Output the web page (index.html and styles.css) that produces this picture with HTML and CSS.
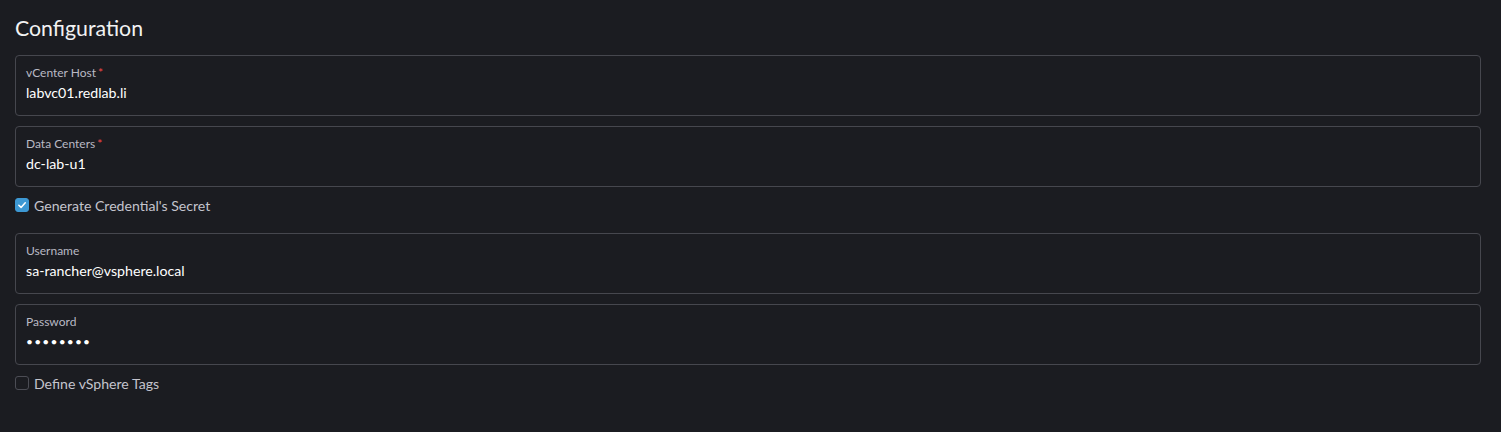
FILE: index.html
```html
<!DOCTYPE html>
<html>
<head>
<meta charset="utf-8">
<link rel="stylesheet" href="styles.css">
</head>
<body>
<div class="page">
  <h3 class="title">Configuration</h3>
  <div class="field">
    <label class="label">vCenter Host<span class="req">*</span></label>
    <div class="value">labvc01.redlab.li</div>
  </div>
  <div class="field">
    <label class="label">Data Centers<span class="req">*</span></label>
    <div class="value">dc-lab-u1</div>
  </div>
  <div class="check-row check-row-first">
    <span class="checkbox checked">
      <svg viewBox="0 0 14 14" width="14" height="14"><path d="M3.3 7.3 L5.9 9.8 L10.8 4.4" fill="none" stroke="#fff" stroke-width="1.8" stroke-linecap="round" stroke-linejoin="round"/></svg>
    </span>
    <span class="check-label">Generate Credential's Secret</span>
  </div>
  <div class="field">
    <label class="label">Username</label>
    <div class="value">sa-rancher@vsphere.local</div>
  </div>
  <div class="field">
    <label class="label">Password</label>
    <div class="value dots">••••••••</div>
  </div>
  <div class="check-row">
    <span class="checkbox"></span>
    <span class="check-label">Define vSphere Tags</span>
  </div>
</div>
</body>
</html>
```
FILE: styles.css
```css
html, body {
  margin: 0;
  padding: 0;
  background: #1b1c21;
  height: 100%;
}
body {
  font-family: Lato, "Open Sans", sans-serif;
  color: #ffffff;
}
.page {
  display: flex;
  flex-direction: column;
  padding: 14px 20px 0 15px;
}
.title {
  margin: 0;
  font-size: 21.3px;
  font-weight: 400;
  line-height: 28px;
  color: #f2f2f2;
  margin-bottom: 13px;
}
.field {
  border: 1px solid #46474e;
  border-radius: 4px;
  padding: 10px 10px 9px 10px;
  margin-bottom: 10px;
  display: flex;
  flex-direction: column;
}
.label {
  font-size: 12px;
  line-height: 14px;
  color: #b9b9c4;
}
.req {
  color: #f64747;
  margin-left: 2px;
}
.value {
  font-size: 14.2px;
  line-height: 26px;
  color: #ffffff;
}
.dots {
  font-size: 12px;
  letter-spacing: 1.2px;
}
.check-row {
  display: flex;
  align-items: center;
  gap: 5px;
  height: 16px;
  margin-bottom: 10px;
}
.check-row-first {
  margin-bottom: 20px;
}
.checkbox {
  width: 12px;
  height: 12px;
  border: 1px solid #4c4d55;
  border-radius: 3px;
  display: flex;
  align-items: center;
  justify-content: center;
  background: #1b1c21;
}
.checkbox.checked {
  background: #3d98d3;
  border-color: #3d98d3;
}
.checkbox svg {
  width: 12px;
  height: 12px;
}
.check-label {
  font-size: 14.1px;
  color: #c4c4cd;
}
```
